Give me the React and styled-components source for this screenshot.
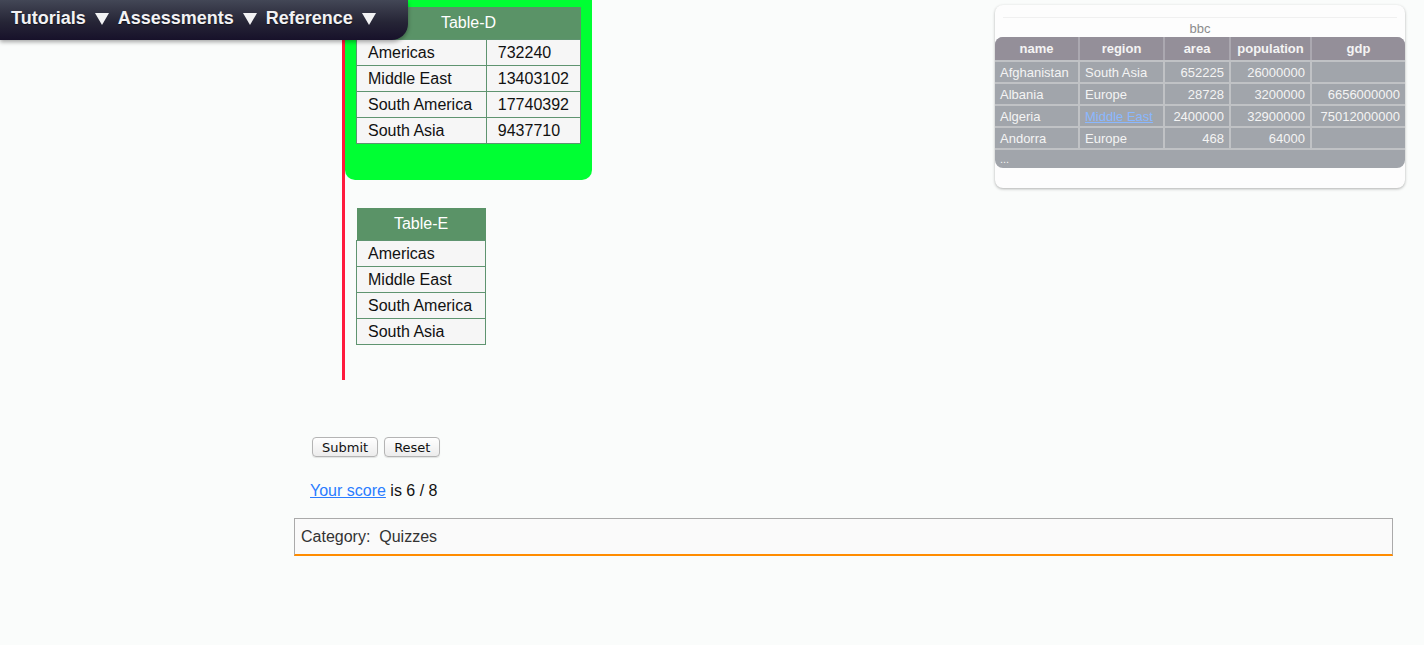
import React from 'react';
import styled, { createGlobalStyle } from 'styled-components';

const GlobalStyle = createGlobalStyle`
  html, body {
    margin: 0;
    padding: 0;
    background-color: #fafcfb;
    font-family: "Liberation Sans", Arial, sans-serif;
  }
`;

const NavBar = styled.nav`
  position: absolute;
  top: 0;
  left: 0;
  z-index: 10;

  display: flex;
  align-items: center;
  gap: 9px;

  height: 40px;
  padding: 0 32px 3px 11px;
  box-sizing: border-box;
  border-bottom-right-radius: 16px;
  background: linear-gradient(to bottom, #434756 0%, #262536 55%, #17112a 100%);
  box-shadow: 0 2px 4px rgba(0, 0, 0, 0.35);
`;

const NavItem = styled.span`
  display: flex;
  align-items: center;
  gap: 9px;
  font-size: 18px;
  font-weight: bold;
  color: #f2f2f4;
  text-shadow: 0 1px 1px rgba(0, 0, 0, 0.5);
  white-space: nowrap;

  &::after {
    content: '';
    width: 0;
    height: 0;
    margin-top: 1px;
    border-left: 7.5px solid transparent;
    border-right: 7.5px solid transparent;
    border-top: 12px solid #f2f2f4;
  }
`;

const Page = styled.div`
  padding: 0 19px 0 294px;
`;

const TopRow = styled.div`
  display: flex;
  align-items: flex-start;
`;

const Quiz = styled.div`
  margin-left: 48px;
  padding-bottom: 35px;
  border-left: 3px solid #ff1a3d;
`;

const GreenBox = styled.div`
  width: 225px;
  padding: 7px 11px 36px;
  background-color: #00ff33;
  border-radius: 0 0 10px 10px;
`;

const DataTable = styled.table`
  border-collapse: collapse;
  margin: ${({ $detached }) => ($detached ? '28px 0 0 11px' : '0')};
  width: ${({ $width }) => $width}px;
  font-size: 16px;

  th {
    height: 32px;
    padding: 0;
    background-color: #5a9367;
    color: #ffffff;
    font-weight: normal;
    text-align: center;
  }

  td {
    height: 24px;
    padding: 1px 11px 0;
    border: 1px solid #5f9470;
    background-color: #f6f6f6;
    color: #111111;
    white-space: nowrap;
  }
`;

const BbcPanel = styled.div`
  margin: 5px 0 0 auto;
  width: 410px;
  padding: 12px 0 20px;
  background-color: #fdfdfd;
  border-radius: 8px;
  box-shadow: 0 1px 3px rgba(0, 0, 0, 0.3);
`;

const Caption = styled.div`
  margin: 0 8px;
  height: 19px;
  line-height: 21px;
  border-top: 1px solid #f0f0f0;
  text-align: center;
  font-size: 13px;
  color: #8c8c8c;
`;

const BbcTable = styled.table`
  width: 100%;
  border-collapse: separate;
  border-spacing: 0;
  border-radius: 8px;
  overflow: hidden;
  background-color: #a1a5ab;
  font-size: 13px;
  color: #f4f4f4;

  th {
    height: 23px;
    padding: 0 5px;
    background-color: #948f99;
    font-weight: bold;
    text-align: center;
    border-left: 2px solid #aba8b0;
  }

  td {
    height: 20px;
    padding: 0 5px;
    border-left: 2px solid #c0c2c5;
    border-top: 2px solid #c0c2c5;
    white-space: nowrap;
  }

  th:first-child,
  td:first-child {
    border-left: none;
  }
`;

const Cell = styled.td`
  text-align: ${({ $num }) => ($num ? 'right' : 'left')};
`;

const MoreCell = styled.td`
  && {
    height: 18px;
  }
  font-size: 11px;
`;

const BbcLink = styled.a`
  color: #8ab8ff;
  text-decoration: underline;
`;

const ButtonRow = styled.div`
  display: flex;
  gap: 6px;
  margin: 57px 0 0 18px;
`;

const Button = styled.button`
  height: 20px;
  padding: 0 9px;
  border: 1px solid #b4b4b4;
  border-radius: 4px;
  background: linear-gradient(to bottom, #ffffff, #ececec);
  font-family: "DejaVu Sans", sans-serif;
  font-size: 13px;
  color: #111111;
  box-shadow: 0 1px 1px rgba(0, 0, 0, 0.1);
`;

const Score = styled.p`
  margin: 25px 0 0 16px;
  font-size: 16px;
  color: #111111;

  a {
    color: #2a7cff;
    text-decoration: underline;
  }
`;

const CategoryBox = styled.div`
  margin: 18px 12px 0 0;
  height: 35px;
  padding-left: 6px;
  display: flex;
  align-items: center;
  border: 1px solid #aaaaaa;
  border-bottom: 2px solid #ff8c00;
  background-color: #fafafa;
  font-size: 16px;
  color: #333333;
  white-space: pre;
`;

const regions = [
  ['Americas', '732240'],
  ['Middle East', '13403102'],
  ['South America', '17740392'],
  ['South Asia', '9437710'],
];

const countries = [
  ['Afghanistan', 'South Asia', '652225', '26000000', ''],
  ['Albania', 'Europe', '28728', '3200000', '6656000000'],
  ['Algeria', 'Middle East', '2400000', '32900000', '75012000000'],
  ['Andorra', 'Europe', '468', '64000', ''],
];

const widths = [83, 85, 66, 81, 95];

export default function App() {
  return (
    <>
      <GlobalStyle />
      <NavBar>
        <NavItem>Tutorials</NavItem>
        <NavItem>Assessments</NavItem>
        <NavItem>Reference</NavItem>
      </NavBar>
      <Page>
        <TopRow>
          <Quiz>
            <GreenBox>
              <DataTable $width={225}>
                <thead>
                  <tr><th colSpan={2}>Table-D</th></tr>
                </thead>
                <tbody>
                  {regions.map(([name, value]) => (
                    <tr key={name}>
                      <td style={{ width: 107 }}>{name}</td>
                      <td>{value}</td>
                    </tr>
                  ))}
                </tbody>
              </DataTable>
            </GreenBox>
            <DataTable $width={130} $detached>
              <thead>
                <tr><th>Table-E</th></tr>
              </thead>
              <tbody>
                {regions.map(([name]) => (
                  <tr key={name}><td>{name}</td></tr>
                ))}
              </tbody>
            </DataTable>
          </Quiz>
          <BbcPanel>
            <Caption>bbc</Caption>
            <BbcTable>
              <colgroup>
                {widths.map((w, i) => <col key={i} style={{ width: w }} />)}
              </colgroup>
              <thead>
                <tr>
                  <th>name</th>
                  <th>region</th>
                  <th>area</th>
                  <th>population</th>
                  <th>gdp</th>
                </tr>
              </thead>
              <tbody>
                {countries.map(([name, region, area, pop, gdp]) => (
                  <tr key={name}>
                    <Cell>{name}</Cell>
                    <Cell>
                      {region === 'Middle East' ? <BbcLink href="#">{region}</BbcLink> : region}
                    </Cell>
                    <Cell $num>{area}</Cell>
                    <Cell $num>{pop}</Cell>
                    <Cell $num>{gdp}</Cell>
                  </tr>
                ))}
                <tr><MoreCell colSpan={5}>...</MoreCell></tr>
              </tbody>
            </BbcTable>
          </BbcPanel>
        </TopRow>
        <ButtonRow>
          <Button>Submit</Button>
          <Button>Reset</Button>
        </ButtonRow>
        <Score>
          <a href="#">Your score</a> is 6 / 8
        </Score>
        <CategoryBox>Category:  Quizzes</CategoryBox>
      </Page>
    </>
  );
}
